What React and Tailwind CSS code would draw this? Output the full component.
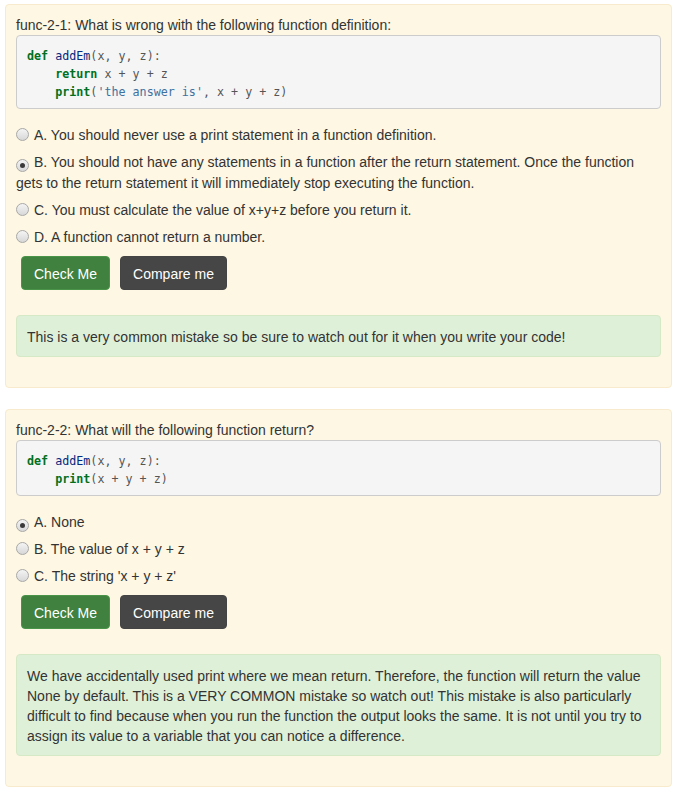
import React from 'react';

const questions = [
  {
    title: 'func-2-1: What is wrong with the following function definition:',
    code: [
      [
        { t: 'def', c: 'kw' },
        { t: ' ' },
        { t: 'addEm', c: 'fn' },
        { t: '(x, y, z):', c: 'op' },
      ],
      [
        { t: '    ' },
        { t: 'return', c: 'kw' },
        { t: ' x + y + z', c: 'op' },
      ],
      [
        { t: '    ' },
        { t: 'print', c: 'kw' },
        { t: '(', c: 'op' },
        { t: "'the answer is'", c: 'str' },
        { t: ', x + y + z)', c: 'op' },
      ],
    ],
    options: [
      'A. You should never use a print statement in a function definition.',
      'B. You should not have any statements in a function after the return statement. Once the function gets to the return statement it will immediately stop executing the function.',
      'C. You must calculate the value of x+y+z before you return it.',
      'D. A function cannot return a number.',
    ],
    checked: 1,
    feedback: 'This is a very common mistake so be sure to watch out for it when you write your code!',
  },
  {
    title: 'func-2-2: What will the following function return?',
    code: [
      [
        { t: 'def', c: 'kw' },
        { t: ' ' },
        { t: 'addEm', c: 'fn' },
        { t: '(x, y, z):', c: 'op' },
      ],
      [
        { t: '    ' },
        { t: 'print', c: 'kw' },
        { t: '(x + y + z)', c: 'op' },
      ],
    ],
    options: [
      'A. None',
      'B. The value of x + y + z',
      "C. The string 'x + y + z'",
    ],
    checked: 0,
    feedback:
      'We have accidentally used print where we mean return. Therefore, the function will return the value None by default. This is a VERY COMMON mistake so watch out! This mistake is also particularly difficult to find because when you run the function the output looks the same. It is not until you try to assign its value to a variable that you can notice a difference.',
  },
];

const tokenClass = {
  kw: 'text-[#007020] font-bold',
  fn: 'text-[#06287e]',
  str: 'text-[#4070a0]',
  op: 'text-[#555555]',
};

function Radio({ checked }) {
  return (
    <span className="inline-flex w-[13px] h-[13px] mr-[5px] align-[-1px] rounded-full border border-[#a8a8a8] bg-gradient-to-b from-[#f4f4f4] to-[#d8d8d8] items-center justify-center">
      {checked && <span className="block w-[5px] h-[5px] rounded-full bg-[#3a3a3a]" />}
    </span>
  );
}

function Question({ q }) {
  return (
    <div className="w-[667px] border border-[#f8ebcd] rounded-[4px] bg-[#fdf7e3] px-[10px] pt-[10px] pb-[11px]">
      <p className="leading-5">{q.title}</p>
      <pre className="bg-[#f5f5f5] border border-[#cccccc] rounded-[4px] px-[10px] pt-[11px] pb-[7px] text-[11.7px] leading-[18px] text-[#333]" style={{ fontFamily: '"DejaVu Sans Mono", monospace' }}>
        {q.code.map((line, i) => (
          <div key={i}>
            {line.map((tok, j) => (
              <span key={j} className={tok.c ? tokenClass[tok.c] : ''}>{tok.t}</span>
            ))}
          </div>
        ))}
      </pre>

      <div className="mt-[16px] flex flex-col gap-[6px]">
        {q.options.map((opt, i) => (
          <div key={i} className="leading-[21px]">
            <Radio checked={i === q.checked} />
            {opt}
          </div>
        ))}
      </div>

      <div className="mt-[8px] ml-[5px] flex gap-[10px]">
        <button className="bg-[#408140] border border-[#4a944a] text-white rounded-[4px] px-3 pt-[7px] pb-[5px] leading-5">
          Check Me
        </button>
        <button className="bg-[#464646] border border-[#444444] text-white rounded-[4px] px-3 pt-[7px] pb-[5px] leading-5">
          Compare me
        </button>
      </div>

      <div className="mt-[25px] mb-[19px] bg-[#dff0d8] border border-[#d6e9c6] rounded-[4px] px-[10px] pt-[11px] pb-[9px] leading-5">
        {q.feedback}
      </div>
    </div>
  );
}

export default function App() {
  return (
    <div className="min-h-screen bg-white pt-[4px] pl-[5px] text-[14px] text-[#333]" style={{ fontFamily: '"Liberation Sans", Arial, sans-serif' }}>
      <div className="flex flex-col gap-[21px]">
        {questions.map((q, i) => (
          <Question key={i} q={q} />
        ))}
      </div>
    </div>
  );
}
